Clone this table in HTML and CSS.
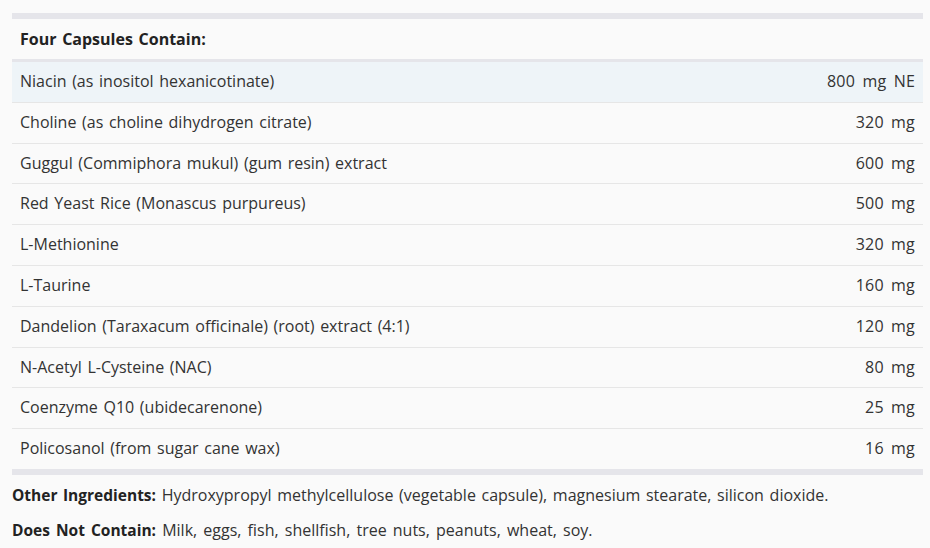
FILE: index.html
```html
<!DOCTYPE html>
<html lang="en">
<head>
    <meta charset="UTF-8">
    <meta name="viewport" content="width=device-width, initial-scale=1.0">
    <title>Supplement Facts</title>
    <link rel="stylesheet" href="styles.css">
</head>
<body>
    <div class="facts">
        <table class="facts-table">
            <thead>
                <tr>
                    <th colspan="2">Four Capsules Contain:</th>
                </tr>
            </thead>
            <tbody>
                <tr class="active"><td>Niacin (as inositol hexanicotinate)</td><td class="amount">800 mg NE</td></tr>
                <tr><td>Choline (as choline dihydrogen citrate)</td><td class="amount">320 mg</td></tr>
                <tr><td>Guggul (Commiphora mukul) (gum resin) extract</td><td class="amount">600 mg</td></tr>
                <tr><td>Red Yeast Rice (Monascus purpureus)</td><td class="amount">500 mg</td></tr>
                <tr><td>L-Methionine</td><td class="amount">320 mg</td></tr>
                <tr><td>L-Taurine</td><td class="amount">160 mg</td></tr>
                <tr><td>Dandelion (Taraxacum officinale) (root) extract (4:1)</td><td class="amount">120 mg</td></tr>
                <tr><td>N-Acetyl L-Cysteine (NAC)</td><td class="amount">80 mg</td></tr>
                <tr><td>Coenzyme Q10 (ubidecarenone)</td><td class="amount">25 mg</td></tr>
                <tr><td>Policosanol (from sugar cane wax)</td><td class="amount">16 mg</td></tr>
            </tbody>
        </table>

        <p class="note"><strong>Other Ingredients:</strong> Hydroxypropyl methylcellulose (vegetable capsule), magnesium stearate, silicon dioxide.</p>
        <p class="note"><strong>Does Not Contain:</strong> Milk, eggs, fish, shellfish, tree nuts, peanuts, wheat, soy.</p>
    </div>
</body>
</html>
```

FILE: styles.css
```css
body {
    background-color: #fafafa;
    font-family: "Open Sans", sans-serif;
    color: #333;
    margin: 0;
    word-spacing: 1.5px;
}

.facts {
    padding: 13px 7px 0 12px;
}

.facts-table {
    width: 100%;
    border-collapse: collapse;
    border-top: 6px solid #e5e5ea;
    border-bottom: 6px solid #e5e5ea;
    font-size: 16px;
}

.facts-table th {
    text-align: left;
    font-weight: bold;
    color: #222;
    padding: 9px 8px;
    line-height: 22px;
    border-bottom: 3px solid #e5e5ea;
}

.facts-table td {
    padding: 9px 8px;
    line-height: 21.8px;
    border-bottom: 1px solid #e6e6e6;
}

.facts-table tr:last-child td {
    border-bottom: none;
}

.facts-table tr.active td {
    background-color: #eef4f8;
}

.amount {
    text-align: right;
    white-space: nowrap;
    word-spacing: 3px;
    letter-spacing: 0.2px;
}

.note {
    font-size: 16px;
    margin: 8px 0 0;
    line-height: 24px;
}

.note + .note {
    margin-top: 11px;
    word-spacing: 2px;
}

.note strong {
    font-size: 15.5px;
    color: #222;
}
```
